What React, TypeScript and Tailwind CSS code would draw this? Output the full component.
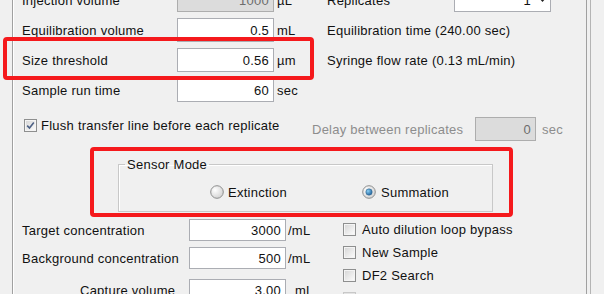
import React from "react";

let Check: React.FC<{ checked?: boolean; disabled?: boolean }> = ({ checked, disabled }) => {
  return (
    <div
      className={
        "flex h-[13px] w-[13px] shrink-0 items-center justify-center border " +
        (disabled ? "border-[#c8c8c8]" : "border-[#8e8f8f]")
      }
    >
      <div
        className={
          "flex h-[11px] w-[11px] items-center justify-center border bg-gradient-to-br " +
          (disabled
            ? "border-[#e4e4e4] from-[#ececec] to-[#f4f4f4]"
            : "border-[#f4f4f4] from-[#d8d8d8] to-[#fafafa]")
        }
      >
        {checked && (
          <svg width="9" height="9" viewBox="0 0 9 9">
            <path d="M1.2 4.6 L3.5 7 L7.8 1.6" fill="none" stroke="#4d6185" strokeWidth="1.6" />
          </svg>
        )}
      </div>
    </div>
  );
};

let Radio: React.FC<{ checked?: boolean }> = ({ checked }) => {
  return (
    <svg width="14" height="14" viewBox="0 0 14 14" className="shrink-0">
      <defs>
        <radialGradient id="rg" cx="0.35" cy="0.35" r="0.75">
          <stop offset="0" stopColor="#ffffff" />
          <stop offset="1" stopColor="#cfcfcf" />
        </radialGradient>
        <radialGradient id="dot" cx="0.35" cy="0.35" r="0.7">
          <stop offset="0" stopColor="#8ad0f5" />
          <stop offset="1" stopColor="#1d5f9a" />
        </radialGradient>
      </defs>
      <circle cx="7" cy="7" r="6.3" fill="url(#rg)" stroke="#8e8f8f" strokeWidth="1" />
      {checked && <circle cx="7" cy="7" r="3.2" fill="url(#dot)" stroke="#3e6e94" strokeWidth="0.6" />}
    </svg>
  );
};

let Field: React.FC<{ value: string; w: string; h: string; disabled?: boolean }> = ({ value, w, h, disabled }) => {
  return (
    <div
      className={
        "flex items-center justify-end border pr-[4px] " +
        w +
        " " +
        h +
        (disabled ? " border-[#adadad] bg-[#dcdcdc] text-[#6d6d6d]" : " border-[#abadb3] bg-white")
      }
    >
      {value}
    </div>
  );
};

let App: React.FC = () => {
  let topLeft = [
    { label: "Injection volume", value: "1000", unit: "µL", disabled: true },
    { label: "Equilibration volume", value: "0.5", unit: "mL" },
    { label: "Size threshold", value: "0.56", unit: "µm" },
    { label: "Sample run time", value: "60", unit: "sec" },
  ];

  let options = [
    { label: "Auto dilution loop bypass" },
    { label: "New Sample" },
    { label: "DF2 Search" },
    { label: "Smart DF2 sample dilution", disabled: true },
  ];

  return (
    <div className="relative h-[294px] w-[604px] overflow-hidden bg-[#f0f0f0] font-['Liberation_Sans',Arial,sans-serif] text-[13px] leading-[15px] tracking-[0.25px] text-[#111]">
      <div className="flex h-full">
        <div className="w-[12px] shrink-0" />
        <div className="h-full w-[575px] shrink-0 border-x border-[#a0a0a0] shadow-[inset_1px_0_0_#ffffff]">
          {/* top block */}
          <div className="-mt-[12px] grid grid-cols-[314px_1fr] gap-y-[6px]">
            {topLeft.map((r, i) => (
              <React.Fragment key={r.label}>
                <div className="flex h-[24px] items-center pl-[9px]">
                  <div className="w-[155px]">{r.label}</div>
                  <Field value={r.value} w="w-[97px]" h="h-[24px]" disabled={r.disabled} />
                  <div className="ml-[3px]">{r.unit}</div>
                </div>
                <div className="flex h-[24px] items-center">
                  {i === 0 && (
                    <>
                      <div className="w-[127px]">Replicates</div>
                      <div className="flex h-[24px] w-[97px] items-center justify-end border border-[#abadb3] bg-white pr-[4px]">
                        <span className="mr-[8px]">1</span>
                        <svg width="7" height="4" viewBox="0 0 7 4">
                          <path d="M0 0 H7 L3.5 4 Z" fill="#222" />
                        </svg>
                      </div>
                    </>
                  )}
                  {i === 1 && <div className="mt-[1px]">Equilibration time (240.00 sec)</div>}
                  {i === 2 && <div className="mt-[1px]">Syringe flow rate (0.13 mL/min)</div>}
                </div>
              </React.Fragment>
            ))}
          </div>

          {/* flush row */}
          <div className="mt-[15px] flex">
            <div className="flex h-[17px] w-[299px] items-center pl-[11px]">
              <Check checked />
              <div className="ml-[4px]">Flush transfer line before each replicate</div>
            </div>
            <div className="flex h-[24px] items-center text-[#8d8d8d]">
              <div className="w-[163px]">Delay between replicates</div>
              <Field value="0" w="w-[61px]" h="h-[24px]" disabled />
              <div className="ml-[6px]">sec</div>
            </div>
          </div>

          {/* sensor mode */}
          <fieldset className="ml-[105px] mt-[16px] w-[375px] border border-[#c8c8c8] px-0 pb-[11px] pt-[12px] shadow-[inset_1px_1px_0_#ffffff]">
            <legend className="ml-[6px] px-[2px] leading-[15px]">Sensor Mode</legend>
            <div className="flex h-[16px] items-center pl-[91px]">
              <Radio />
              <div className="ml-[4px] w-[134px]">Extinction</div>
              <Radio checked />
              <div className="ml-[5px]">Summation</div>
            </div>
          </fieldset>

          {/* lower block */}
          <div className="flex">
            <div className="mt-[7px] w-[330px] pl-[9px]">
              <div className="flex h-[22px] items-center">
                <div className="w-[167px]">Target concentration</div>
                <Field value="3000" w="w-[97px]" h="h-[22px]" />
                <div className="ml-[2px]">/mL</div>
              </div>
              <div className="mt-[6px] flex h-[22px] items-center">
                <div className="w-[167px]">Background concentration</div>
                <Field value="500" w="w-[97px]" h="h-[22px]" />
                <div className="ml-[2px]">/mL</div>
              </div>
              <div className="mt-[10px] flex h-[22px] items-center">
                <div className="w-[167px] pl-[58px]">Capture volume</div>
                <Field value="3.00" w="w-[97px]" h="h-[22px]" />
                <div className="ml-[9px]">mL</div>
              </div>
            </div>
            <div className="mt-[6px] flex flex-col">
              {options.map((o) => (
                <div key={o.label} className="flex h-[23px] items-center">
                  <Check disabled={o.disabled} />
                  <div className={"ml-[6px] " + (o.disabled ? "text-[#a0a0a0]" : "")}>{o.label}</div>
                </div>
              ))}
            </div>
          </div>
        </div>
        <div className="w-[3px] shrink-0" />
        <div className="h-full w-px shrink-0 bg-[#b4b4b4]" />
      </div>

      {/* annotation highlights */}
      <div className="absolute left-[3px] top-[37px] h-[43px] w-[311px] rounded-[4px] border-[4px] border-[#f5191c]" />
      <div className="absolute left-[90px] top-[147px] h-[70px] w-[423px] rounded-[4px] border-[4px] border-[#f5191c]" />
    </div>
  );
};

export default App;
